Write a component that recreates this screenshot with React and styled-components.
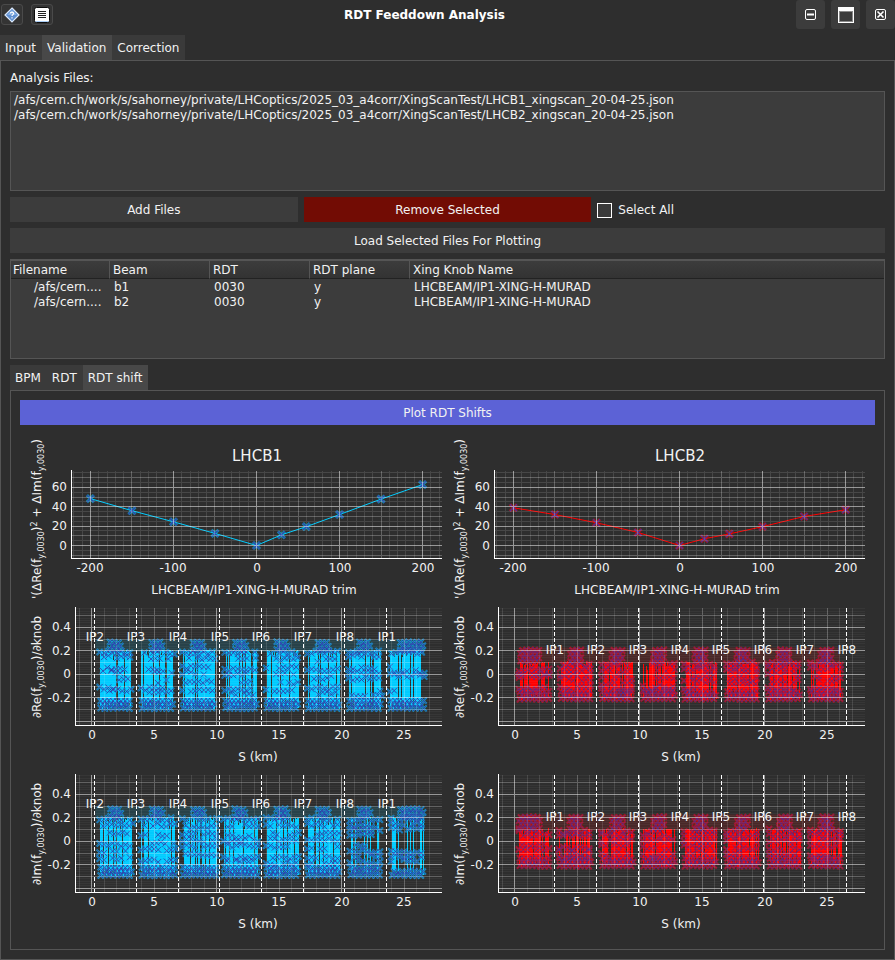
import React, { useState } from "react";
import styled, { createGlobalStyle } from "styled-components";

const GlobalStyle = createGlobalStyle`
  * { box-sizing: border-box; }
  body {
    margin: 0;
    background: #2e2e2e;
    color: #f2f2f2;
    font: 12px/15px "DejaVu Sans", sans-serif;
  }
  button, input { font: inherit; color: inherit; margin: 0; }
`;

const Window = styled.div`
  display: flex;
  flex-direction: column;
  min-height: 100vh;
`;

const TitleBar = styled.header`
  display: flex;
  align-items: flex-start;
  height: 35px;
`;

const ToolGroup = styled.div`
  display: flex;
  gap: 8px;
  padding: 4px 0 0 1px;
`;

const ToolButton = styled.button`
  width: 22px;
  height: 21px;
  padding: 0;
  display: grid;
  place-items: center;
  background: #343434;
  border: 1px solid #4a4a4a;
  border-radius: 3px;
`;

const Title = styled.h1`
  flex: 1;
  margin: 0;
  padding-top: 8px;
  text-align: center;
  font-size: 12px;
  line-height: 15px;
  font-weight: bold;
  color: #ffffff;
`;

const WindowControls = styled.div`
  display: flex;
  gap: 6px;
`;

const ControlButton = styled.button`
  width: 29px;
  height: 29px;
  padding: 0;
  display: grid;
  place-items: center;
  background: #3c3c3c;
  border: 0;
  border-radius: 3px;
`;

const TabBar = styled.div`
  display: flex;
`;

const Tab = styled.button`
  height: 25px;
  padding: 1px 6px 0 5px;
  border: 0;
  background: ${(p) => (p.$active ? "#484848" : "#3a3a3a")};
`;

const Page = styled.main`
  flex: 1;
  display: flex;
  flex-direction: column;
  gap: 6px;
  border: 1px solid #555555;
  padding: 9px;
`;

const Caption = styled.div`
  padding-top: 1px;
  line-height: 14px;
`;

const FileList = styled.ul`
  margin: 0;
  padding: 1px 3px;
  height: 100px;
  list-style: none;
  background: #3c3c3c;
  border: 1px solid #555555;
  overflow: hidden;
  white-space: nowrap;
`;

const ActionRow = styled.div`
  display: grid;
  grid-template-columns: repeat(3, 1fr);
  gap: 6px;
`;

const fills = { plain: "#3c3c3c", danger: "#720c04", accent: "#5c62d6" };

const PushButton = styled.button`
  height: 25px;
  padding: 1px 0 0;
  border: 0;
  background: ${(p) => fills[p.$tone || "plain"]};
`;

const CheckLabel = styled.label`
  display: flex;
  align-items: center;
  gap: 6px;
  padding-top: 1px;
`;

const CheckBox = styled.input`
  appearance: none;
  width: 15px;
  height: 15px;
  border: 1px solid #ffffff;
  background: #3a3a3a;
  &:checked { background: #5c62d6; }
`;

const TableFrame = styled.div`
  height: 100px;
  border: 1px solid #555555;
  background: #3c3c3c;
  overflow: hidden;
`;

const Table = styled.table`
  width: 100%;
  table-layout: fixed;
  border-collapse: separate;
  border-spacing: 0;
`;

const HeadCell = styled.th`
  width: ${(p) => (p.$wide ? "auto" : p.$first ? "99px" : "100px")};
  height: 19px;
  padding: 1px 0 0 ${(p) => (p.$first ? "2px" : "3px")};
  text-align: left;
  font-weight: normal;
  border-top: 1px solid #555555;
  border-bottom: 1px solid #222222;
  border-right: ${(p) => (p.$wide ? "0" : "1px solid #555555")};
  background: linear-gradient(#3c3c3c, #333333);
`;

const Cell = styled.td`
  padding: 1px 0 0 ${(p) => (p.$first ? "23px" : "4px")};
  height: 15px;
  line-height: 14px;
  white-space: nowrap;
`;

const PlotSection = styled.section`
  flex: 1;
  display: flex;
  flex-direction: column;
`;

const PlotPanel = styled.div`
  flex: 1;
  border: 1px solid #555555;
  padding: 9px;
  display: flex;
  flex-direction: column;
  gap: 6px;
`;

const ChartGrid = styled.div`
  display: grid;
  grid-template-columns: 1fr 1fr;
  padding: 0 5px 0 4px;
`;

const Chart = styled.svg`
  display: block;
  width: 100%;
  height: auto;
  font: 12px "DejaVu Sans", sans-serif;
  fill: #f2f2f2;
`;

const snap = (v) => Math.floor(v) + 0.5;

/* One path of grid lines for every brightness level. */
function GridLines({ box, xs, ys }) {
  const level = (n) =>
    xs.filter((t) => t[1] === n).map((t) => `M${snap(t[0])} ${box.top}V${box.bottom}`).join("") +
    ys.filter((t) => t[1] === n).map((t) => `M${box.left} ${snap(t[0])}H${box.right}`).join("");
  return (
    <g fill="none" stroke="#ffffff" shapeRendering="crispEdges">
      <path d={level(0)} strokeOpacity="0.5" />
      <path d={level(1)} strokeOpacity="0.25" />
      <path d={level(2)} strokeOpacity="0.12" />
      <path d={level(3)} strokeOpacity="0.04" />
    </g>
  );
}

function Axes({ box }) {
  return (
    <path
      d={`M${box.left + 0.5} ${box.top - 1}V${box.bottom + 0.5}H${box.right}`}
      fill="none" stroke="#ffffff" shapeRendering="crispEdges"
    />
  );
}

const crosses = (points, arm) =>
  points
    .map(([x, y]) => `M${x - arm} ${y - arm}l${2 * arm} ${2 * arm}m0 ${-2 * arm}l${-2 * arm} ${2 * arm}`)
    .join("");

function Markers({ points, color }) {
  const d = crosses(points, 3.5);
  return (
    <g fill="none">
      <path d={d} stroke={color} strokeWidth="3" strokeOpacity="0.6" />
      <path d={d} stroke="#3838ac" strokeWidth="1.3" strokeOpacity="0.85" />
    </g>
  );
}

function DenseMarkers({ points, color, ink }) {
  const d = crosses(points, 3);
  return (
    <g fill="none">
      <path d={d} stroke={color} strokeWidth="2" strokeOpacity="0.7" />
      <path d={d} stroke="#3232a4" strokeWidth="1" strokeOpacity={ink} />
    </g>
  );
}

const Sub = ({ children }) => <tspan dy="3" fontSize="8">{children}</tspan>;

const trimX = [-200, -150, -100, -50, 0, 30, 60, 100, 150, 200];

function TrimChart({ title, values, color }) {
  const box = { left: 47, right: 418, top: 40, bottom: 127 };
  const px = (v) => 232.5 + v * 0.8305;
  const py = (v) => 114.5 - v * 0.967;
  const xs = [];
  for (let v = -220; v <= 220; v += 10) xs.push([px(v), v % 100 === 0 ? 0 : v % 50 === 0 ? 1 : 2]);
  const ys = [];
  for (let v = -10; v <= 75; v += 5) ys.push([py(v), v % 20 === 0 ? 0 : v % 10 === 0 ? 1 : 2]);
  const points = trimX.map((v, i) => [px(v), py(values[i])]);
  return (
    <Chart viewBox="0 0 423 172" role="img" aria-label={title}>
      <text x="233" y="30" fontSize="15" textAnchor="middle">{title}</text>
      <path d={"M" + points.map((p) => p.join(" ")).join("L")} stroke={color} fill="none" />
      <Markers points={points} color={color} />
      <GridLines box={box} xs={xs} ys={ys} />
      <Axes box={box} />
      {[0, 20, 40, 60].map((v) => (
        <text key={v} x="43" y={Math.round(py(v)) + 4} textAnchor="end">{v}</text>
      ))}
      {[-200, -100, 0, 100, 200].map((v) => (
        <text key={v} x={Math.round(px(v))} y="141" textAnchor="middle">{v}</text>
      ))}
      <text x="230" y="163" textAnchor="middle">LHCBEAM/IP1-XING-H-MURAD trim</text>
      <text transform="translate(17 8) rotate(-90)" textAnchor="end">
        '(ΔRe(f<Sub>y,0030</Sub><tspan dy="-3">)</tspan><tspan dy="-4" fontSize="8">2</tspan>
        <tspan dy="4"> + ΔIm(f</tspan><Sub>y,0030</Sub><tspan dy="-3">)</tspan>
      </text>
    </Chart>
  );
}

function generator(seed) {
  let s = seed;
  return () => {
    s = (s * 1103515245 + 12345) % 2147483648;
    return s / 2147483648;
  };
}

/* Builds the vertical strokes and the marker rows of the eight arcs. */
function buildArcs({ arcs, px, py, peak, body, floor, seed }) {
  const rand = generator(seed);
  let strokes = "";
  const points = [];
  arcs.forEach((arc) => {
    const left = px(arc.from) + 3;
    const right = px(arc.to) - 2;
    const width = right - left;
    const density = arc.density ?? 0.84;
    for (let x = left + 1; x < right - 1; x += 1) {
      if (rand() < density) {
        const a = py(body + 0.02 - rand() * rand() * rand() * 0.14);
        const b = py(floor + rand() * rand() * 0.12);
        strokes += `M${snap(x)} ${a.toFixed(1)}V${b.toFixed(1)}`;
      }
    }
    /* Sparse rows lose a few markers, so the strokes show between them. */
    arc.rows.forEach(([value, a = 0, b = 1]) => {
      for (let x = left + a * width; x <= left + b * width; x += 4.3) {
        if (rand() < 0.84) points.push([x, py(value + (rand() - 0.5) * 0.03)]);
      }
    });
    /* Staggered rows give the woven texture of the crowded bands. */
    const band = (v0, v1, x0, x1) => {
      let k = 0;
      for (let v = v0; v <= v1; v += 0.032, k += 1) {
        for (let x = x0 + (k % 2 ? 2 : 0); x <= x1; x += 4.1) {
          points.push([x, py(v + (rand() - 0.5) * 0.008)]);
        }
      }
    };
    band(floor + 0.01, floor + (arc.base ?? 0.075), left + 1, right - 1);
    const [b0, b1] = arc.bump ?? [0.32, 0.66];
    band(body + 0.02, peak, left + b0 * width, left + b1 * width);
  });
  return { strokes, points };
}

function ShiftChart({ part, beam, arcs, seed }) {
  const box = { left: 51, right: 418, top: 5, bottom: 122 };
  const px = (v) => 67.7 + v * 12.507;
  const py = (v) => 71.3 - v * 117;
  const xs = [];
  for (let v = -1; v <= 27; v += 1) xs.push([px(v), v % 10 === 0 ? 0 : v % 5 === 0 ? 1 : 2]);
  const ys = [];
  for (let i = -21; i <= 28; i += 1) {
    ys.push([py(i / 50), i % 10 === 0 ? 0 : i % 5 === 0 ? 1 : 3]);
  }
  const data = buildArcs({ arcs, px, py, seed, ...beam });
  const haloTop = py(beam.peak + 0.01);
  return (
    <Chart viewBox="0 0 423 167" role="img" aria-label={`${part} shift along S`}>
      <rect x={px(0.3)} y={haloTop} width={px(26) - px(0.3)} height={py(beam.body) - haloTop}
        fill={beam.color} fillOpacity="0.13" />
      <path d={data.strokes} stroke={beam.color} fill="none" shapeRendering="crispEdges" />
      <DenseMarkers points={data.points} color={beam.color} ink={beam.ink} />
      <GridLines box={box} xs={xs} ys={ys} />
      <Axes box={box} />
      {beam.ips.map((name, i) => {
        const x = px(beam.firstIp + i * 3.336);
        return (
          <g key={name}>
            <path d={`M${snap(x)} 5V122`} stroke="#ffffff" strokeDasharray="4 2" shapeRendering="crispEdges" />
            <text x={Math.round(x)} y={beam.labelY} textAnchor="middle">{name}</text>
          </g>
        );
      })}
      {[0.4, 0.2, 0, -0.2].map((v) => (
        <text key={v} x="47" y={Math.round(py(v)) + 4} textAnchor="end">{v}</text>
      ))}
      {[0, 5, 10, 15, 20, 25].map((v) => (
        <text key={v} x={Math.round(px(v))} y="136" textAnchor="middle">{v}</text>
      ))}
      <text x="234" y="158" textAnchor="middle">S (km)</text>
      <text transform="translate(17 64) rotate(-90)" textAnchor="middle">
        ∂{part}(f<Sub>y,0030</Sub><tspan dy="-3">)/∂knob</tspan>
      </text>
    </Chart>
  );
}

const beam1 = {
  color: "#00ccff", ink: 0.82,
  peak: 0.29, body: 0.19, floor: -0.3, firstIp: 0.23, labelY: 38,
  ips: ["IP2", "IP3", "IP4", "IP5", "IP6", "IP7", "IP8", "IP1"],
};
const beam2 = {
  color: "#ff0000", ink: 0.66,
  peak: 0.22, body: 0.09, floor: -0.22, firstIp: 3.19, labelY: 51,
  ips: ["IP1", "IP2", "IP3", "IP4", "IP5", "IP6", "IP7", "IP8"],
};

const arc = (from, to, rows, extra = {}) => ({ from, to, rows, ...extra });

const re1 = [
  arc(0.4, 3.4, [[0.19], [0.15], [0.05, 0.1, 0.8], [0.02, 0.1, 0.7], [-0.05, 0.6, 0.9], [-0.12, 0, 0.5], [-0.14, 0.3, 1]]),
  arc(3.7, 6.8, [[0.18, 0.1, 1], [0.13, 0.3, 0.9], [0.04, 0.1, 0.6], [0.02, 0.4, 1], [-0.06, 0.5, 0.8], [-0.11, 0, 0.8], [-0.15]]),
  arc(7.0, 10.1, [[0.18], [0.13, 0.2, 1], [0.06, 0, 0.8], [0.01, 0, 0.7], [-0.06, 0.1, 0.9], [-0.14]]),
  arc(10.4, 13.5, [[0.18], [0.13, 0.4, 1], [0.04], [0, 0, 0.7], [-0.06, 0.5, 0.8], [-0.13], [-0.17, 0.2, 0.9]]),
  arc(13.7, 16.8, [[0.18], [0.13, 0.3, 1], [0.06, 0, 1], [0, 0.3, 0.9], [-0.08, 0.3, 1], [-0.14, 0, 0.8]]),
  arc(17.0, 20.1, [[0.19], [0.12, 0.3, 1], [0.04, 0, 0.9], [-0.03, 0.2, 0.8], [-0.12, 0, 0.9], [-0.16, 0.2, 0.9]]),
  arc(20.3, 23.4, [[0.19], [0.16], [0.05], [0.02], [-0.04], [-0.13, 0.8, 1], [-0.18, 0.1, 1]], { density: 0.78 }),
  arc(23.6, 26.8, [[0.18, 0.05, 0.95], [0.08, 0, 0.15], [0.02], [-0.01], [-0.14, 0, 0.2]],
    { bump: [0.3, 1], density: 0.84 }),
];
const im1 = [
  arc(0.4, 3.5, [[0.19], [0.14, 0.1, 1], [0.07, 0.3, 0.9], [-0.03], [-0.09, 0, 0.8], [-0.15]]),
  arc(3.7, 6.9, [[0.19], [0.14, 0.1, 1], [0.05, 0, 0.9], [-0.02, 0.2, 1], [-0.07, 0, 1], [-0.17]]),
  arc(7.0, 10.2, [[0.18], [0.12, 0.1, 1], [0.06], [0.01], [-0.04], [-0.12, 0.1, 1]]),
  arc(10.3, 13.5, [[0.19], [0.13], [0.04], [0], [-0.04], [-0.14], [-0.17, 0.1, 1]]),
  arc(13.7, 16.8, [[0.19], [0.13], [0.06, 0.2, 1], [0.01], [-0.05, 0, 0.8], [-0.14, 0.2, 1], [-0.19]]),
  arc(17.0, 20.1, [[0.19], [0.14], [0.06, 0.3, 1], [0.01], [-0.06], [-0.14], [-0.19]]),
  arc(20.4, 23.3, [[0.18], [0.13], [0.1], [0.05, 0, 0.7], [-0.04, 0.2, 0.6], [-0.09], [-0.13], [-0.18]], { density: 0.5 }),
  arc(23.7, 26.8, [[0.19], [0.15], [0.11], [-0.1], [-0.13], [-0.17]], { bump: [0.28, 1], density: 0.45, base: 0.05 }),
];
const re2 = [
  arc(0.1, 3.0, [[0.04], [0.01], [-0.02], [-0.12]], { bump: [0.05, 0.7], density: 0.7 }),
  arc(3.4, 6.4, [[0.08, 0.1, 1], [0.04], [0], [-0.04], [-0.11]]),
  arc(6.7, 9.7, [[0.08], [0.03, 0, 0.9], [-0.03], [-0.08], [-0.12]]),
  arc(10.0, 13.1, [[0.08, 0.3, 1], [0.04, 0.3, 1], [-0.03, 0.4, 1], [-0.1], [-0.13]]),
  arc(13.3, 16.4, [[0.08], [0.04], [-0.02, 0.1, 0.9], [-0.06], [-0.12, 0, 0.4]]),
  arc(16.7, 19.7, [[0.09], [0.05], [0.02], [-0.04], [-0.08, 0.1, 0.9]]),
  arc(20.0, 23.1, [[0.09], [0.05], [0, 0, 0.9], [-0.06], [-0.12]]),
  arc(23.4, 26.4, [[0.09], [0.05], [-0.02], [-0.06], [-0.12]]),
];
const im2 = [
  arc(0.1, 3.0, [[0.09, 0, 0.8], [0.05], [-0.04, 0.1, 1], [-0.07]], { bump: [0, 0.7], density: 0.7 }),
  arc(3.3, 6.4, [[0.08], [0.05], [-0.06], [-0.09], [-0.13]], { density: 0.6 }),
  arc(6.7, 9.8, [[0.08], [0.05], [0.01], [-0.04], [-0.1]]),
  arc(10.0, 13.1, [[0.08, 0, 0.6], [0.04], [0], [-0.06], [-0.12]]),
  arc(13.3, 16.4, [[0.09], [0.05], [0], [-0.04], [-0.09]]),
  arc(16.7, 19.8, [[0.08], [0.04], [0], [-0.06], [-0.1, 0, 0.6]]),
  arc(20.1, 23.1, [[0.09], [0.05], [0], [-0.06], [-0.1]]),
  arc(23.4, 26.4, [[0.09], [0.05], [0.01], [-0.05], [-0.12]]),
];

const files = [
  "/afs/cern.ch/work/s/sahorney/private/LHCoptics/2025_03_a4corr/XingScanTest/LHCB1_xingscan_20-04-25.json",
  "/afs/cern.ch/work/s/sahorney/private/LHCoptics/2025_03_a4corr/XingScanTest/LHCB2_xingscan_20-04-25.json",
];
const columns = ["Filename", "Beam", "RDT", "RDT plane", "Xing Knob Name"];
const rows = [
  ["/afs/cern....", "b1", "0030", "y", "LHCBEAM/IP1-XING-H-MURAD"],
  ["/afs/cern....", "b2", "0030", "y", "LHCBEAM/IP1-XING-H-MURAD"],
];

const HelpIcon = () => (
  <svg width="16" height="16" viewBox="0 0 16 16">
    <path d="M8 1l7 7-7 7-7-7z" fill="#5f8fd0" stroke="#dce9fa" strokeWidth="1.2" />
    <path d="M8 3.2L12.8 8H3.2z" fill="#86afe4" />
    <path d="M6.3 6.4c.2-1.7 3.4-1.6 3.3.1C9.6 7.7 8 7.6 8 9M8 10.3v1.2" fill="none" stroke="#fff" strokeWidth="1.2" />
  </svg>
);

const NotesIcon = () => (
  <svg width="16" height="16" viewBox="0 0 16 16">
    <rect x="0.5" y="0.5" width="15" height="15" rx="2" fill="#ffffff" stroke="#0c0c0c" />
    <path d="M1.5 14.5h13" stroke="#a9cdf5" />
    <path d="M4 4.5h8M4 6.5h8M4 8.5h8M4 10.5h8" stroke="#222" shapeRendering="crispEdges" />
  </svg>
);

const MinimizeIcon = () => (
  <svg width="11" height="11" viewBox="0 0 11 11" fill="none" stroke="#ffffff">
    <rect x="0.5" y="0.5" width="10" height="10" rx="1.5" />
    <path d="M2 5.5h7" strokeWidth="2" />
  </svg>
);

const MaximizeIcon = () => (
  <svg width="16" height="16" viewBox="0 0 16 16">
    <rect width="16" height="16" fill="#ffffff" />
    <rect x="1.5" y="4.5" width="13" height="10" fill="#3c3c3c" stroke="#8a8a8a" />
  </svg>
);

const CloseIcon = () => (
  <svg width="11" height="11" viewBox="0 0 11 11" fill="none" stroke="#ffffff">
    <rect x="0.5" y="0.5" width="10" height="10" rx="1.5" />
    <path d="M2.5 2.5l6 6m0-6l-6 6" strokeWidth="1.6" />
  </svg>
);

function Tabs({ names, initial }) {
  const [active, setActive] = useState(initial);
  return (
    <TabBar role="tablist">
      {names.map((name) => (
        <Tab key={name} role="tab" aria-selected={name === active} $active={name === active}
          onClick={() => setActive(name)}>{name}</Tab>
      ))}
    </TabBar>
  );
}

export default function App() {
  return (
    <Window>
      <GlobalStyle />
      <TitleBar>
        <ToolGroup>
          <ToolButton aria-label="Help"><HelpIcon /></ToolButton>
          <ToolButton aria-label="Log"><NotesIcon /></ToolButton>
        </ToolGroup>
        <Title>RDT Feeddown Analysis</Title>
        <WindowControls>
          <ControlButton aria-label="Minimize"><MinimizeIcon /></ControlButton>
          <ControlButton aria-label="Maximize"><MaximizeIcon /></ControlButton>
          <ControlButton aria-label="Close"><CloseIcon /></ControlButton>
        </WindowControls>
      </TitleBar>
      <Tabs names={["Input", "Validation", "Correction"]} initial="Validation" />
      <Page>
        <Caption id="files-caption">Analysis Files:</Caption>
        <FileList aria-labelledby="files-caption">
          {files.map((f) => <li key={f}>{f}</li>)}
        </FileList>
        <ActionRow>
          <PushButton>Add Files</PushButton>
          <PushButton $tone="danger">Remove Selected</PushButton>
          <CheckLabel><CheckBox type="checkbox" />Select All</CheckLabel>
        </ActionRow>
        <PushButton>Load Selected Files For Plotting</PushButton>
        <TableFrame>
          <Table>
            <thead>
              <tr>
                {columns.map((c, i) => (
                  <HeadCell key={c} $first={i === 0} $wide={i === 4}>{c}</HeadCell>
                ))}
              </tr>
            </thead>
            <tbody>
              {rows.map((r) => (
                <tr key={r[1]}>
                  {r.map((c, i) => <Cell key={columns[i]} $first={i === 0}>{c}</Cell>)}
                </tr>
              ))}
            </tbody>
          </Table>
        </TableFrame>
        <PlotSection>
          <Tabs names={["BPM", "RDT", "RDT shift"]} initial="RDT shift" />
          <PlotPanel>
            <PushButton $tone="accent">Plot RDT Shifts</PushButton>
            <ChartGrid>
              <TrimChart title="LHCB1" color="#00ccff" values={[48.5, 36, 24.5, 12.5, 0, 11, 19.5, 32, 48, 63]} />
              <TrimChart title="LHCB2" color="#ff0000" values={[39, 32, 23.5, 13.5, 0, 7, 12, 19.5, 30, 37]} />
              <ShiftChart part="Re" beam={beam1} arcs={re1} seed={11} />
              <ShiftChart part="Re" beam={beam2} arcs={re2} seed={23} />
              <ShiftChart part="Im" beam={beam1} arcs={im1} seed={37} />
              <ShiftChart part="Im" beam={beam2} arcs={im2} seed={41} />
            </ChartGrid>
          </PlotPanel>
        </PlotSection>
      </Page>
    </Window>
  );
}
